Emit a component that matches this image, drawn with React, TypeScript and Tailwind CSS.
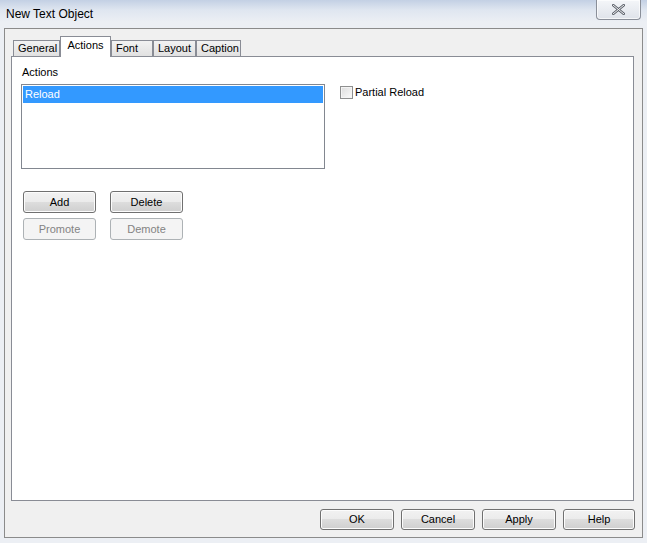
import React, { useState } from "react";

const tabs = [
  { label: "General", w: "w-[47px]" },
  { label: "Actions", w: "w-[51px]" },
  { label: "Font", w: "w-[42px]" },
  { label: "Layout", w: "w-[43px]" },
  { label: "Caption", w: "w-[45px]" },
];

interface BtnProps {
  label: string;
  disabled?: boolean;
  className?: string;
}

const WinButton: React.FC<BtnProps> = ({ label, disabled, className }) => {
  if (disabled) {
    return (
      <button
        disabled
        className={`rounded-[3px] border border-[#adb2b5] bg-[#f4f4f4] text-[11px] text-[#838383] ${className}`}
      >
        {label}
      </button>
    );
  }
  return (
    <button
      className={`rounded-[3px] border border-[#707070] bg-[linear-gradient(to_bottom,#f2f2f2_0%,#ebebeb_50%,#dddddd_50%,#cfcfcf_100%)] text-[11px] text-black shadow-[inset_0_0_0_1px_#fcfcfc] ${className}`}
    >
      {label}
    </button>
  );
};

export default function App() {
  const [partial, setPartial] = useState(false);
  const active = "Actions";

  return (
    <div className="w-[647px] h-[543px] overflow-hidden bg-[linear-gradient(to_bottom,#c3d0e4_0px,#dfe6f0_10px,#eceff4_22px,#eceff4_100%)] font-['Liberation_Sans',Arial,sans-serif] text-black">
      {/* title bar */}
      <div className="h-[28px] flex items-start">
        <span className="ml-[6px] mt-[6px] text-[12px] leading-[16px]">
          New Text Object
        </span>
        <div className="ml-auto mr-[6px] w-[45px] h-[20px] rounded-b-[4px] border border-t-0 border-[#8a8f99] bg-[linear-gradient(to_bottom,#f4f6f9,#dfe3ea)] flex items-center justify-center shadow-[inset_0_0_0_1px_#ffffffaa]">
          <svg width="13" height="11" viewBox="0 0 13 11">
            <path
              d="M1 1 L12 10 M12 1 L1 10"
              stroke="#5a5f68"
              strokeWidth="2.6"
              strokeLinecap="round"
            />
            <path
              d="M1 1 L12 10 M12 1 L1 10"
              stroke="#f4f5f7"
              strokeWidth="1"
              strokeLinecap="round"
            />
          </svg>
        </div>
      </div>

      {/* client area */}
      <div className="mx-[4px] h-[510px] border border-[#8b8b8b] bg-[#f0f0f0] flex flex-col">
        <div className="mt-[7px] ml-[8px] h-[20px] flex items-end">
          {tabs.map((t) =>
            t.label === active ? (
              <div
                key={t.label}
                className={`${t.w} h-[21px] -mb-[1px] relative z-10 border border-b-0 border-[#898c95] bg-white text-[11px] leading-[17px] text-center`}
              >
                {t.label}
              </div>
            ) : (
              <div
                key={t.label}
                className={`${t.w} h-[16px] border border-b-0 border-[#898c95] bg-[linear-gradient(to_bottom,#f2f2f2,#e1e1e1)] text-[11px] leading-[15px] pl-[4px]`}
              >
                {t.label}
              </div>
            )
          )}
        </div>

        {/* tab panel */}
        <div className="ml-[6px] w-[623px] h-[445px] border border-[#898c95] bg-white pl-[9px] pt-[9px]">
          <div className="ml-[1px] text-[11px] leading-[13px]">Actions</div>
          <div className="mt-[5px] flex items-start">
            <div className="w-[304px] h-[85px] border border-[#828790] p-[1px]">
              <div className="h-[17px] bg-[#3399ff] text-white text-[11px] leading-[17px] pl-[2px]">
                Reload
              </div>
            </div>
            <label className="ml-[15px] mt-[2px] flex items-center text-[11px] leading-[13px] cursor-default">
              <input
                type="checkbox"
                checked={partial}
                onChange={(e) => setPartial(e.target.checked)}
                className="appearance-none w-[13px] h-[13px] border border-[#8e8f8f] bg-[linear-gradient(135deg,#dcdcdc,#fbfbfb)] shadow-[inset_0_0_0_1px_#f4f4f4] checked:bg-white"
              />
              <span className="ml-[2px]">Partial Reload</span>
            </label>
          </div>

          <div className="mt-[22px] ml-[2px] grid grid-cols-[73px_73px] gap-x-[14px] gap-y-[5px]">
            <WinButton label="Add" className="h-[22px]" />
            <WinButton label="Delete" className="h-[22px]" />
            <WinButton label="Promote" disabled className="h-[22px]" />
            <WinButton label="Demote" disabled className="h-[22px]" />
          </div>
        </div>

        <div className="mt-[8px] pr-[7px] flex justify-end gap-[7px]">
          <WinButton label="OK" className="w-[74px] h-[21px]" />
          <WinButton label="Cancel" className="w-[74px] h-[21px]" />
          <WinButton label="Apply" className="w-[74px] h-[21px]" />
          <WinButton label="Help" className="w-[72px] h-[21px]" />
        </div>
      </div>
    </div>
  );
}
